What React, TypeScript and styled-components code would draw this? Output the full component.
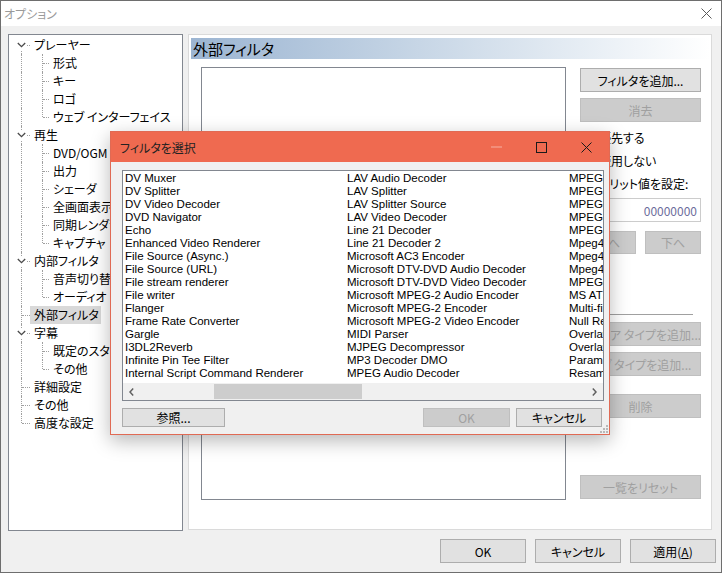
import React from 'react';
import styled, { createGlobalStyle } from 'styled-components';

const GlobalStyle = createGlobalStyle`
  html, body { margin: 0; padding: 0; background: #fff; }
  body {
    font-family: "Noto Sans CJK JP", "Noto Sans", sans-serif;
    font-size: 12px;
    font-feature-settings: "palt";
    color: #000;
  }
  * { box-sizing: border-box; }
`;

const Window = styled.div`
  position: relative;
  width: 722px;
  height: 573px;
  border: 1px solid #6e6e6e;
  background: #f0f0f0;
  display: flex;
  flex-direction: column;
  overflow: hidden;
`;

const TitleBar = styled.div`
  height: 25px;
  background: #fff;
  display: flex;
  align-items: center;
  justify-content: space-between;
  padding-left: 3px;
`;

const TitleText = styled.span`
  color: #9a9a9a;
  font-size: 12px;
`;

const TitleClose = styled.div`
  width: 30px;
  height: 25px;
  display: flex;
  align-items: center;
  justify-content: center;
`;

const Body = styled.div`
  flex: 1;
  display: flex;
  flex-direction: column;
  padding: 8px 7px 9px 7px;
`;

const Main = styled.div`
  display: flex;
  gap: 5px;
  height: 497px;
`;

const Tree = styled.div`
  width: 175px;
  height: 497px;
  border: 1px solid #828790;
  background: #fff;
  padding-top: 1px;
  overflow: hidden;
`;

const Row = styled.div<{ $level: number }>`
  position: relative;
  height: 18px;
  display: flex;
  align-items: center;
  padding-left: ${p => (p.$level === 0 ? 21 : 40)}px;
`;

const Label = styled.span<{ $sel?: boolean }>`
  height: 18px;
  line-height: 18px;
  padding: 0 2px 0 4px;
  background: ${p => (p.$sel ? '#d9d9d9' : 'transparent')};
  white-space: nowrap;
`;

const VDots = styled.span<{ $x: number; $top: boolean; $bottom: boolean }>`
  position: absolute;
  left: ${p => p.$x}px;
  top: ${p => (p.$top ? 0 : 9)}px;
  bottom: ${p => (p.$bottom ? 0 : 9)}px;
  border-left: 1px dotted #a0a0a0;
`;

const HDots = styled.span<{ $x: number; $w: number }>`
  position: absolute;
  left: ${p => p.$x}px;
  top: 9px;
  width: ${p => p.$w}px;
  border-top: 1px dotted #a0a0a0;
`;

const Chevron = styled.span`
  position: absolute;
  left: 8px;
  top: 4px;
  width: 9px;
  height: 10px;
  background: #fff;
  display: flex;
  align-items: center;
  justify-content: center;
`;

const Panel = styled.div`
  width: 524px;
  height: 496px;
  border: 1px solid #dadada;
  background: #fff;
  padding: 3px 1px 0 2px;
`;

const PageHeader = styled.div`
  height: 21px;
  line-height: 21px;
  padding-left: 2px;
  font-size: 15px;
  background: linear-gradient(to right, #9cb5d2 0%, #c3d3e4 40%, #e6edf4 75%, #ffffff 100%);
`;

const PageContent = styled.div`
  display: flex;
  padding-left: 10px;
  margin-top: 8px;
`;

const FilterBox = styled.div`
  width: 365px;
  height: 433px;
  border: 1px solid #828790;
  background: #fff;
`;

const SideCol = styled.div`
  width: 121px;
  margin-left: 14px;
  display: flex;
  flex-direction: column;
`;

const Button = styled.div<{ $w?: number; $h?: number; $off?: boolean; $mt?: number }>`
  width: ${p => (p.$w ? `${p.$w}px` : '100%')};
  height: ${p => p.$h ?? 24}px;
  margin-top: ${p => p.$mt ?? 0}px;
  flex-shrink: 0;
  background: ${p => (p.$off ? '#cccccc' : '#e1e1e1')};
  border: 1px solid ${p => (p.$off ? '#bfbfbf' : '#adadad')};
  color: ${p => (p.$off ? '#a0a0a0' : '#000')};
  font-size: 12px;
  display: flex;
  align-items: center;
  justify-content: center;
  white-space: nowrap;
  overflow: hidden;
`;

const RadioRow = styled.div<{ $mt?: number }>`
  height: 23px;
  margin-top: ${p => p.$mt ?? 0}px;
  display: flex;
  align-items: center;
  gap: 6px;
  white-space: nowrap;
`;

const RadioDot = styled.span`
  width: 13px;
  height: 13px;
  border-radius: 50%;
  border: 1px solid #333;
  background: #fff;
`;

const MeritEdit = styled.div`
  height: 24px;
  margin: 3px 0 0 18px;
  border: 1px solid #cccccc;
  background: #fff;
  color: #6d6d9c;
  display: flex;
  align-items: center;
  justify-content: flex-end;
  padding-right: 3px;
`;

const PairRow = styled.div<{ $mt?: number }>`
  display: flex;
  gap: 9px;
  margin-top: ${p => p.$mt ?? 0}px;
`;

const Rule = styled.div<{ $mt?: number }>`
  height: 1px;
  width: 113px;
  margin-top: ${p => p.$mt ?? 0}px;
  background: #a0a0a0;
`;

const Footer = styled.div`
  display: flex;
  justify-content: flex-end;
  gap: 9px;
  margin-top: 8px;
  margin-right: -2px;
`;

const Dialog = styled.div`
  position: absolute;
  left: 109px;
  top: 130px;
  width: 500px;
  height: 304px;
  border: 1px solid #e06a54;
  background: #f0f0f0;
  box-shadow: 0 6px 18px rgba(0, 0, 0, 0.28);
  display: flex;
  flex-direction: column;
`;

const DlgTitle = styled.div`
  height: 30px;
  background: #ef6a50;
  display: flex;
  align-items: center;
  padding-left: 9px;
  color: #222;
`;

const DlgControls = styled.div`
  margin-left: auto;
  display: flex;
  height: 30px;
`;

const DlgCtl = styled.span`
  width: 45px;
  display: flex;
  align-items: center;
  justify-content: center;
`;

const DlgBody = styled.div`
  position: relative;
  flex: 1;
  display: flex;
  flex-direction: column;
  padding: 8px 5px 7px 11px;
`;

const PickList = styled.div`
  height: 231px;
  border: 1px solid #828790;
  background: #fff;
  display: flex;
  flex-direction: column;
`;

const PickGrid = styled.div`
  flex: 1;
  overflow: hidden;
  padding: 1px 0 0 2px;
  display: grid;
  grid-template-rows: repeat(16, 13px);
  grid-auto-flow: column;
  grid-auto-columns: 222px;
  font-family: "Liberation Sans", Arial, sans-serif;
  font-size: 11.5px;
  line-height: 13px;
  white-space: nowrap;
`;

const HScroll = styled.div`
  height: 17px;
  background: #f0f0f0;
  display: flex;
  align-items: center;
`;

const ScrollArrow = styled.span`
  width: 17px;
  height: 17px;
  display: flex;
  align-items: center;
  justify-content: center;
`;

const ScrollTrack = styled.div`
  flex: 1;
  height: 17px;
  display: flex;
  align-items: center;
`;

const ScrollThumb = styled.div`
  margin-left: 74px;
  width: 148px;
  height: 15px;
  background: #cdcdcd;
`;

const DlgButtons = styled.div`
  display: flex;
  gap: 6px;
  margin-top: 7px;
  padding-right: 2px;
`;

const Grip = styled.svg`
  position: absolute;
  right: 1px;
  bottom: 1px;
`;

type Node = { label: string; sel?: boolean; children?: string[] };

const tree: Node[] = [
  { label: 'プレーヤー', children: ['形式', 'キー', 'ロゴ', 'ウェブ インターフェイス'] },
  { label: '再生', children: ['DVD/OGM', '出力', 'シェーダ', '全画面表示', '同期レンダラ設定', 'キャプチャ'] },
  { label: '内部フィルタ', children: ['音声切り替え', 'オーディオ レンダラ'] },
  { label: '外部フィルタ', sel: true },
  { label: '字幕', children: ['既定のスタイル', 'その他'] },
  { label: '詳細設定' },
  { label: 'その他' },
  { label: '高度な設定' },
];

const filters = [
  'DV Muxer', 'DV Splitter', 'DV Video Decoder', 'DVD Navigator', 'Echo',
  'Enhanced Video Renderer', 'File Source (Async.)', 'File Source (URL)',
  'File stream renderer', 'File writer', 'Flanger', 'Frame Rate Converter',
  'Gargle', 'I3DL2Reverb', 'Infinite Pin Tee Filter', 'Internal Script Command Renderer',
  'LAV Audio Decoder', 'LAV Splitter', 'LAV Splitter Source', 'LAV Video Decoder',
  'Line 21 Decoder', 'Line 21 Decoder 2', 'Microsoft AC3 Encoder',
  'Microsoft DTV-DVD Audio Decoder', 'Microsoft DTV-DVD Video Decoder',
  'Microsoft MPEG-2 Audio Encoder', 'Microsoft MPEG-2 Encoder',
  'Microsoft MPEG-2 Video Encoder', 'MIDI Parser', 'MJPEG Decompressor',
  'MP3 Decoder DMO', 'MPEG Audio Decoder',
  'MPEG Layer-3 Decoder', 'MPEG Video Decoder', 'MPEG-2 Demultiplexer',
  'MPEG-2 Splitter', 'MPEG-I Stream Splitter', 'Mpeg4 Decoder DMO',
  'Mpeg43 Decoder DMO', 'Mpeg4s Decoder DMO', 'MPEG4 Splitter', 'MS ATSC Filter',
  'Multi-file Parser', 'Null Renderer', 'Overlay Mixer', 'Overlay Mixer2',
  'ParamEq', 'Resampler DMO',
];

const CloseIcon = ({ color, size = 10 }: { color: string; size?: number }) => (
  <svg width={size + 1} height={size + 1} viewBox="0 0 11 11">
    <path d="M0.5 0.5 L10.5 10.5 M10.5 0.5 L0.5 10.5" stroke={color} strokeWidth="1" fill="none" />
  </svg>
);

const TreeView = () => {
  const rows: React.ReactNode[] = [];
  tree.forEach((n, i) => {
    const first = i === 0;
    const last = i === tree.length - 1;
    rows.push(
      <Row key={n.label + i} $level={0}>
        <VDots $x={12} $top={!first} $bottom={!last} />
        <HDots $x={13} $w={8} />
        {n.children && (
          <Chevron>
            <svg width="9" height="6" viewBox="0 0 9 6">
              <path d="M0.8 1 L4.5 4.7 L8.2 1" stroke="#4a4a4a" strokeWidth="1.3" fill="none" />
            </svg>
          </Chevron>
        )}
        <Label $sel={n.sel}>{n.label}</Label>
      </Row>
    );
    n.children?.forEach((c, j) => {
      const lastChild = j === n.children!.length - 1;
      rows.push(
        <Row key={n.label + c} $level={1}>
          <VDots $x={12} $top $bottom />
          <VDots $x={33} $top $bottom={!lastChild} />
          <HDots $x={34} $w={6} />
          <Label>{c}</Label>
        </Row>
      );
    });
  });
  return <Tree>{rows}</Tree>;
};

const FilterDialog = () => (
  <Dialog>
    <DlgTitle>
      フィルタを選択
      <DlgControls>
        <DlgCtl>
          <svg width="11" height="2" viewBox="0 0 11 2">
            <path d="M0 1 H11" stroke="#f6b0a2" strokeWidth="1" />
          </svg>
        </DlgCtl>
        <DlgCtl>
          <svg width="11" height="11" viewBox="0 0 11 11">
            <rect x="0.5" y="0.5" width="10" height="10" stroke="#1a1a1a" strokeWidth="1" fill="none" />
          </svg>
        </DlgCtl>
        <DlgCtl>
          <CloseIcon color="#1a1a1a" />
        </DlgCtl>
      </DlgControls>
    </DlgTitle>
    <DlgBody>
      <PickList>
        <PickGrid>
          {filters.map(f => (
            <span key={f}>{f}</span>
          ))}
        </PickGrid>
        <HScroll>
          <ScrollArrow>
            <svg width="5" height="8" viewBox="0 0 5 8">
              <path d="M4.2 0.6 L1 4 L4.2 7.4" stroke="#606060" strokeWidth="1.5" fill="none" />
            </svg>
          </ScrollArrow>
          <ScrollTrack>
            <ScrollThumb />
          </ScrollTrack>
          <ScrollArrow>
            <svg width="5" height="8" viewBox="0 0 5 8">
              <path d="M0.8 0.6 L4 4 L0.8 7.4" stroke="#606060" strokeWidth="1.5" fill="none" />
            </svg>
          </ScrollArrow>
        </HScroll>
      </PickList>
      <DlgButtons>
        <Button $w={103} $h={19}>参照...</Button>
        <span style={{ flex: 1 }} />
        <Button $w={87} $h={19} $off>OK</Button>
        <Button $w={86} $h={19}>キャンセル</Button>
      </DlgButtons>
      <Grip width="8" height="8" viewBox="0 0 8 8">
        {[
          [6, 0], [6, 3], [3, 3], [6, 6], [3, 6], [0, 6],
        ].map(([x, y]) => (
          <rect key={`${x}-${y}`} x={x} y={y} width="2" height="2" fill="#b8b8b8" />
        ))}
      </Grip>
    </DlgBody>
  </Dialog>
);

export default function App() {
  return (
    <>
      <GlobalStyle />
      <Window>
        <TitleBar>
          <TitleText>オプション</TitleText>
          <TitleClose>
            <CloseIcon color="#5a5a5a" />
          </TitleClose>
        </TitleBar>
        <Body>
          <Main>
            <TreeView />
            <Panel>
              <PageHeader>外部フィルタ</PageHeader>
              <PageContent>
                <FilterBox />
                <SideCol>
                  <Button $mt={1}>フィルタを追加...</Button>
                  <Button $mt={6} $off>消去</Button>
                  <RadioRow $mt={4}><RadioDot />優先する</RadioRow>
                  <RadioRow><RadioDot />使用しない</RadioRow>
                  <RadioRow><RadioDot />メリット値を設定:</RadioRow>
                  <MeritEdit>00000000</MeritEdit>
                  <PairRow $mt={9}>
                    <Button $w={56} $h={23} $off>上へ</Button>
                    <Button $w={56} $h={23} $off>下へ</Button>
                  </PairRow>
                  <Rule $mt={60} />
                  <Button $mt={7} $off>メディア タイプを追加...</Button>
                  <Button $mt={6} $off>サブ タイプを追加...</Button>
                  <Button $mt={18} $off>削除</Button>
                  <Button $mt={57} $off>一覧をリセット</Button>
                </SideCol>
              </PageContent>
            </Panel>
          </Main>
          <Footer>
            <Button $w={86}>OK</Button>
            <Button $w={86}>キャンセル</Button>
            <Button $w={86}>適用(<u>A</u>)</Button>
          </Footer>
        </Body>
        <FilterDialog />
      </Window>
    </>
  );
}
